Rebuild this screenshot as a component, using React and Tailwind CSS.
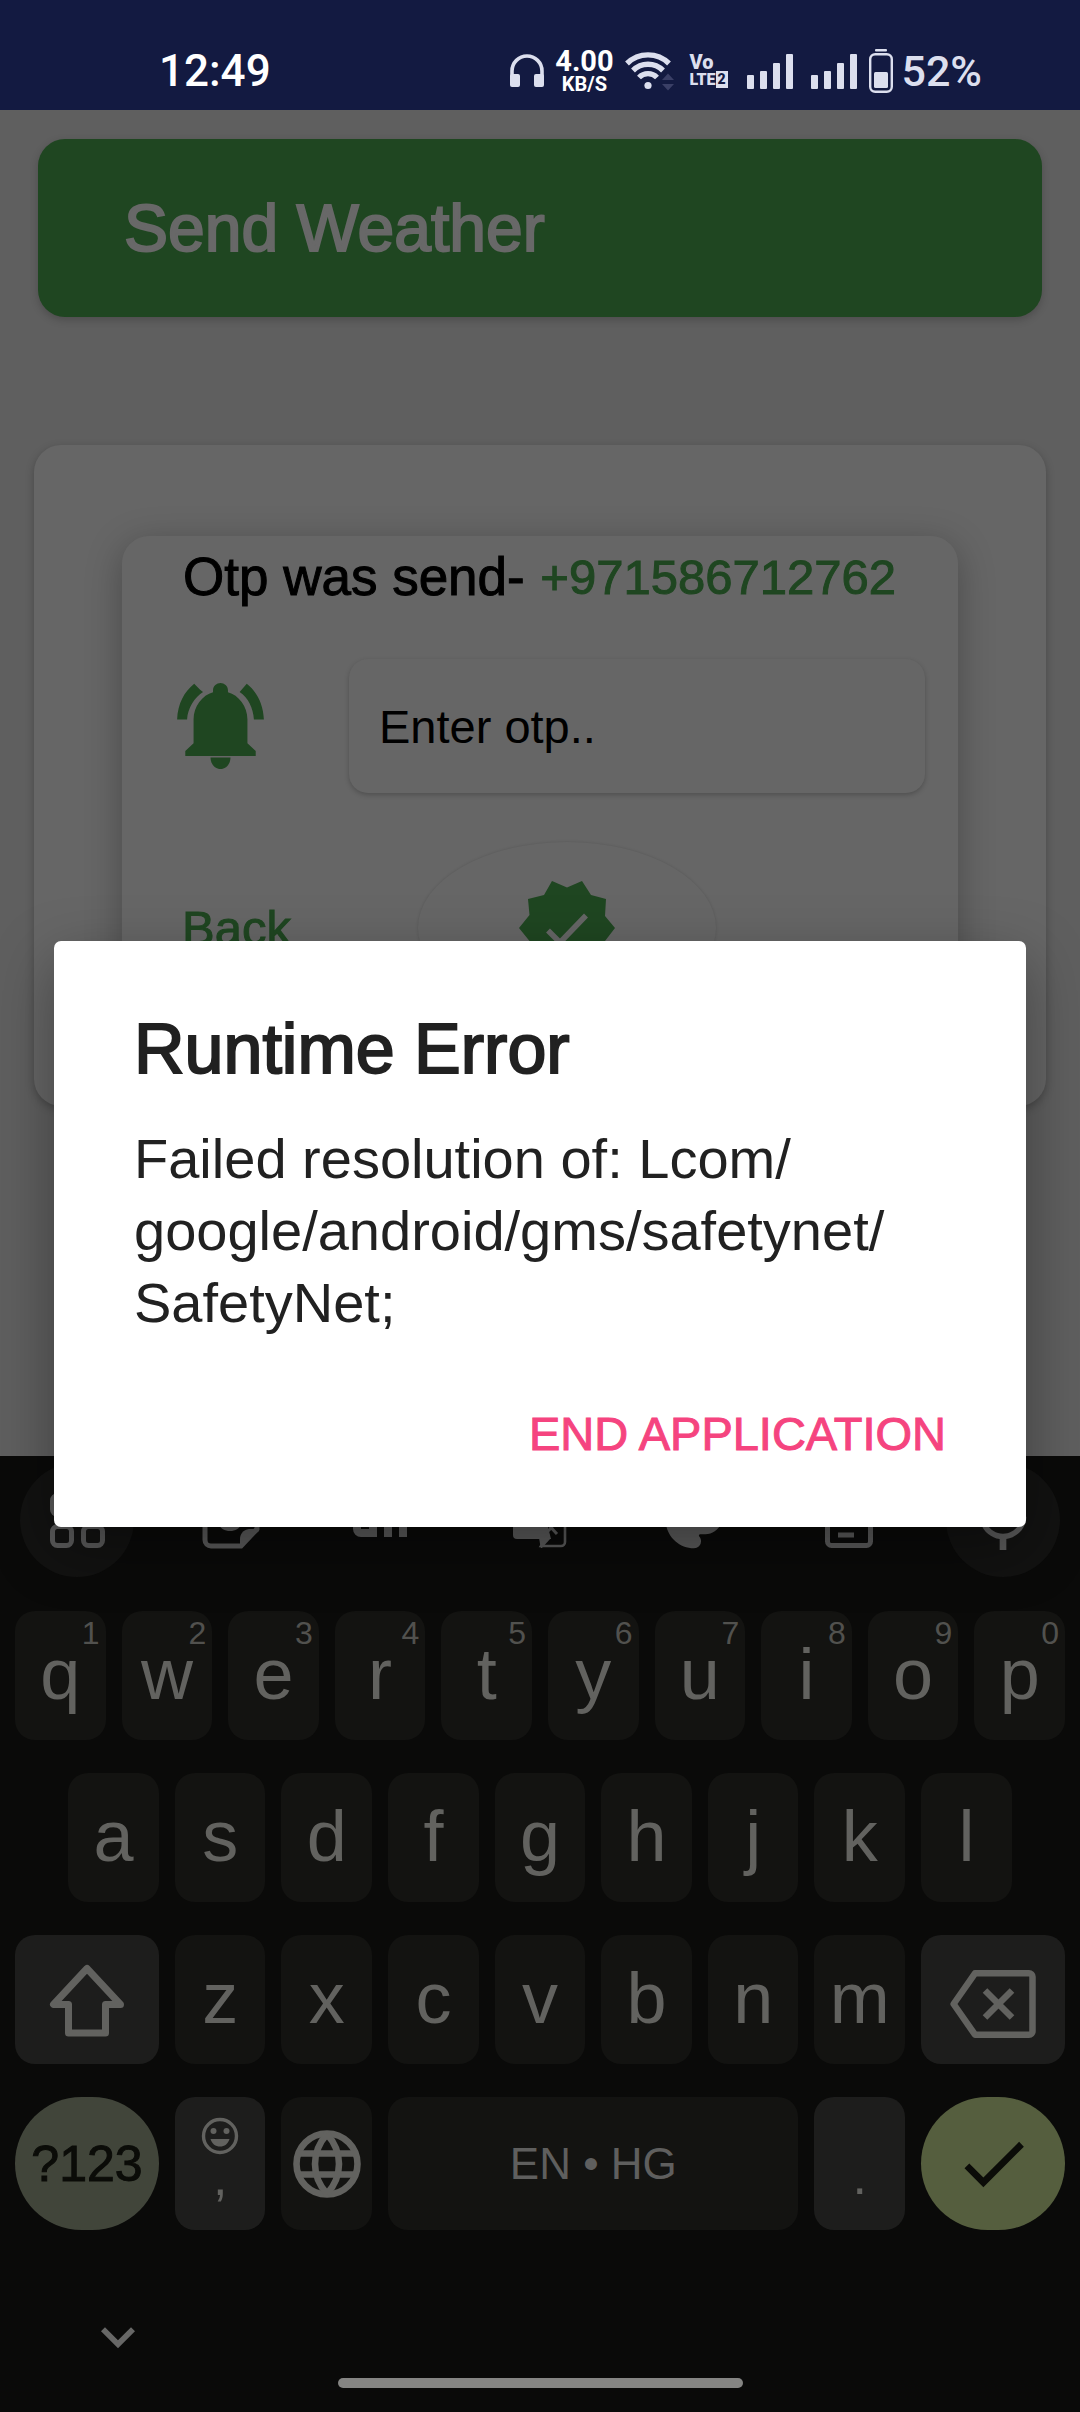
import React from "react";
import { MdCheck, MdKeyboardArrowDown, MdPalette, MdMicNone } from "react-icons/md";

const SANS = "font-['Liberation_Sans',Arial,sans-serif]";
const ROBOTO = "font-['Roboto','Liberation_Sans',sans-serif]";

function Headphones() {
  return (
    <svg viewBox="0 0 34 34" className="h-[34px] w-[34px]" aria-hidden="true">
      <path d="M2 26V17a15 15 0 0 1 30 0v9" fill="none" stroke="currentColor" strokeWidth="3.6" />
      <rect x="0" y="20" width="10" height="13" rx="2" fill="currentColor" />
      <rect x="24" y="20" width="10" height="13" rx="2" fill="currentColor" />
    </svg>
  );
}

function Wifi() {
  return (
    <svg viewBox="0 0 50 42" className="h-[42px] w-[50px]" aria-hidden="true">
      <g fill="none" stroke="currentColor" strokeWidth="5.4">
        <path d="M2 13.5a30 30 0 0 1 42 0" />
        <path d="M8 20.5a21 21 0 0 1 30 0" />
        <path d="M14 27.5a12.500 12.500 0 0 1 18 0" />
      </g>
      <circle cx="23" cy="35.500" r="3.600" fill="currentColor" />
      <path d="M37 30l6-6.500 6 6.500zM37 34h12l-6 6.500z" fill="#3a3f66" />
    </svg>
  );
}

function VoLte() {
  return (
    <span className="flex flex-col text-[16px] font-black leading-[17px]">
      <span className="text-[20px]">Vo</span>
      <span className="flex items-center">
        LTE
        <span className="flex h-[17px] w-3 items-center justify-center bg-[#dcdfee] text-[14px] text-[#131a41]">2</span>
      </span>
    </span>
  );
}

function Signal() {
  return (
    <span className="flex items-end justify-between gap-[6px]">
      <span className="h-[14px] w-[7px] rounded-[1px] bg-current" />
      <span className="h-[18px] w-[7px] rounded-[1px] bg-current" />
      <span className="h-[26px] w-[7px] rounded-[1px] bg-current" />
      <span className="h-[35px] w-[7px] rounded-[1px] bg-current" />
    </span>
  );
}

function Battery() {
  return (
    <svg viewBox="0 0 24 44" className="h-[44px] w-[24px]" aria-hidden="true">
      <rect x="6" y="0" width="12" height="2.400" rx="1" fill="currentColor" />
      <rect x="1.200" y="5.200" width="21.600" height="37.600" rx="5" fill="none" stroke="currentColor" strokeWidth="2.400" />
      <rect x="5" y="23" width="14" height="16" rx="1.500" fill="currentColor" />
    </svg>
  );
}

function Bell() {
  return (
    <svg viewBox="1 2 21 20" preserveAspectRatio="none" className="h-[86px] w-[87px]" fill="currentColor" aria-hidden="true">
      <path d="M6.580 3.580L5.150 2.150C2.760 3.970 1.180 6.800 1.030 10.500h2.400c.15-2.650 1.810-5.200 3.850-6.420z" />
      <path d="M19.570 10.500h2.400c-.15-3.700-1.730-6.530-4.130-8.350l-1.720 1.930c2.020 1.220 3.300 3.770 3.450 6.420z" />
      <path d="M18 10.500c0-3.070-2.130-5.640-4.700-6.320V3.700C13.300 2.670 12.400 2 11.500 2S9.700 2.670 9.700 3.700v.48C7.130 4.860 5 7.430 5 10.500V16l-2 1.800V19h17v-1.200L18 16z" />
      <path d="M9.100 19.300h4.800C13.900 21 12.700 22 11.500 22s-2.400-1-2.400-2.700z" />
    </svg>
  );
}

function VerifiedBadge() {
  return (
    <svg viewBox="0 0 96 94" className="h-[94px] w-[96px]" aria-hidden="true">
      <path d="M96 47L86 35l1-17-15-4L63 0 48 6.500 33 0 25 14 9 18l1.500 16L0 47l10.500 13L9 76l16 4 8 14 15-6.500L63 94l9-14 15-4-1-16z" fill="currentColor" />
      <path d="M29 49.500L41 61.500 67 34.500" fill="none" stroke="#666666" strokeWidth="5.500" />
    </svg>
  );
}

function AppsIcon() {
  return (
    <svg viewBox="0 0 55 55" className="h-[55px] w-[55px]" fill="none" stroke="currentColor" strokeWidth="5" aria-hidden="true">
      <rect x="2.500" y="2.500" width="19" height="19" rx="5" />
      <rect x="33.500" y="2.500" width="19" height="19" rx="5" />
      <rect x="2.500" y="33.500" width="19" height="19" rx="5" />
      <rect x="33.500" y="33.500" width="19" height="19" rx="5" />
    </svg>
  );
}

function StickerIcon() {
  return (
    <svg viewBox="0 0 58 58" className="h-[58px] w-[58px]" aria-hidden="true">
      <path d="M8 3h42a5 5 0 0 1 5 5v30L39 55H9a6 6 0 0 1-6-6V8a5 5 0 0 1 5-5z" fill="none" stroke="currentColor" strokeWidth="5" />
      <path d="M38 56V48c0-5 3-9 9-10h10v2z" fill="currentColor" />
      <path d="M15 28h26c-1 8-6 12-13 12S16 36 15 28z" fill="currentColor" />
    </svg>
  );
}

function GifIcon() {
  return (
    <svg viewBox="0 0 66 34" className="h-[34px] w-[66px]" fill="none" stroke="currentColor" strokeWidth="8" aria-hidden="true">
      <path d="M24 4H8a4 4 0 0 0-4 4v18a4 4 0 0 0 4 4h12V18" />
      <path d="M35 0v34M50 34V4h16M50 18h12" />
    </svg>
  );
}

function TranslateIcon() {
  return (
    <svg viewBox="0 0 54 56" className="h-[56px] w-[54px]" aria-hidden="true">
      <path d="M4 0h22l12 47H4a4 4 0 0 1-4-4V4a4 4 0 0 1 4-4z" fill="currentColor" />
      <path d="M30 11h18a4 4 0 0 1 4 4v35a4 4 0 0 1-4 4H28l6-10" fill="none" stroke="currentColor" strokeWidth="2.600" />
      <path d="M30 22h20M45 22c-2 8-7 15-12 19M32 29l12 13" fill="none" stroke="currentColor" strokeWidth="3" />
      <path d="M26 46h12l-10 11z" fill="currentColor" />
      <path d="M19 21h-6v5h3a6 6 0 1 1-1-8" fill="none" stroke="#0a0a09" strokeWidth="3" />
    </svg>
  );
}

function ClipboardIcon() {
  return (
    <svg viewBox="0 0 48 56" className="h-[56px] w-[48px]" fill="none" stroke="currentColor" strokeWidth="5" aria-hidden="true">
      <rect x="2.500" y="7" width="43" height="46.500" rx="4" />
      <path d="M13 20h22M13 32h22M13 43h16M15 6h18" />
    </svg>
  );
}

function ShiftIcon() {
  return (
    <svg viewBox="0 0 76 74" className="h-[74px] w-[76px]" fill="none" stroke="currentColor" strokeWidth="7" strokeLinejoin="round" aria-hidden="true">
      <path d="M38 5.500L4.500 41.500h15V70h37V41.500h15z" />
    </svg>
  );
}

function BackspaceIcon() {
  return (
    <svg viewBox="0 0 86 68" className="h-[68px] w-[86px]" fill="none" stroke="currentColor" strokeWidth="6.500" aria-hidden="true">
      <path d="M25 3.300h54a3.500 3.500 0 0 1 3.500 3.500v54.400a3.500 3.500 0 0 1-3.500 3.500H25L3.600 34z" strokeLinejoin="round" />
      <path d="M35 20.500l27 27M62 20.500l-27 27" />
    </svg>
  );
}

function GlobeIcon() {
  return (
    <svg viewBox="0 0 68 70" className="h-[70px] w-[68px]" fill="none" stroke="currentColor" strokeWidth="6.600" aria-hidden="true">
      <circle cx="34" cy="35" r="30.500" />
      <path d="M6 24.500h56M6 45.500h56" />
      <path d="M34 5c-16 18-16 42 0 60M34 5c16 18 16 42 0 60" />
    </svg>
  );
}

function EmojiIcon() {
  return (
    <svg viewBox="0 0 38 38" className="h-[38px] w-[38px]" aria-hidden="true">
      <circle cx="19" cy="19" r="16.500" fill="none" stroke="currentColor" strokeWidth="3.400" />
      <circle cx="12.500" cy="14" r="3" fill="currentColor" />
      <circle cx="25.500" cy="14" r="3" fill="currentColor" />
      <path d="M9.500 22h19c-1.500 5-5 7.500-9.500 7.500S11 27 9.500 22z" fill="currentColor" />
    </svg>
  );
}

function StatusBar() {
  return (
    <header className={`flex h-[110px] items-start justify-between bg-[#131a41] pl-[159px] pr-[98px] pt-[44px] text-[#dcdfee] ${ROBOTO}`}>
      <span className="text-[44px] font-medium leading-[54px] text-white">12:49</span>
      <div className="flex h-[54px] items-center">
        <Headphones />
        <span className="ml-[10px] flex w-[60px] flex-col items-center font-bold text-white">
          <span className="text-[29px] leading-[26px]">4.00</span>
          <span className="text-[20px] leading-[20px]">KB/S</span>
        </span>
        <span className="ml-[11px]"><Wifi /></span>
        <span className="ml-[14px] w-[44px]"><VoLte /></span>
        <span className="ml-[14px]"><Signal /></span>
        <span className="ml-[18px]"><Signal /></span>
        <span className="ml-[12px]"><Battery /></span>
        <span className="ml-[8px] text-[43px] font-medium leading-[54px]">52%</span>
      </div>
    </header>
  );
}

function Key({ label, hint, span = "col-span-2" }) {
  return (
    <button type="button" className={`relative flex h-[129px] items-center justify-center rounded-[20px] bg-[#131311] pb-1 text-[72px] leading-[80px] text-[#62625f] ${span}`}>
      {label}
      {hint && <span className="absolute right-[6px] top-1 text-[32px] leading-[36px] text-[#51514e]">{hint}</span>}
    </button>
  );
}

const TOP = "qwertyuiop".split("");
const HOME = "asdfghjkl".split("");
const BOTTOM = "zxcvbnm".split("");

const TOOLS = [
  { label: "Stickers", icon: <StickerIcon /> },
  { label: "GIF", icon: <GifIcon /> },
  { label: "Translate", icon: <TranslateIcon /> },
  { label: "Themes", icon: <MdPalette className="size-[68px]" /> },
  { label: "Clipboard", icon: <ClipboardIcon /> },
];

function Keyboard() {
  return (
    <section aria-label="Keyboard" className="mt-auto flex flex-col bg-[#0a0a09] pt-[7px] text-[#62625f]">
      <div className="flex items-center justify-between px-5 text-[#5a5a5a]">
        <button type="button" aria-label="Menu" className="flex size-[114px] items-center justify-center rounded-full bg-[#121211]"><AppsIcon /></button>
        {TOOLS.map((t) => (
          <button key={t.label} type="button" aria-label={t.label} className="flex size-[114px] items-center justify-center">{t.icon}</button>
        ))}
        <button type="button" aria-label="Voice typing" className="flex size-[114px] items-center justify-center rounded-full bg-[#121211]"><MdMicNone className="size-[80px]" /></button>
      </div>
      <div className="mt-[34px] grid grid-cols-[repeat(20,minmax(0,1fr))] gap-x-4 gap-y-[33px] px-[15px]">
        {TOP.map((k, i) => <Key key={k} label={k} hint={String((i + 1) % 10)} />)}
        {HOME.map((k, i) => <Key key={k} label={k} span={i === 0 ? "col-start-2 col-span-2" : "col-span-2"} />)}
        <button type="button" aria-label="Shift" className="col-span-3 col-start-1 flex h-[129px] items-center justify-center rounded-[20px] bg-[#1d1d1c]"><ShiftIcon /></button>
        {BOTTOM.map((k) => <Key key={k} label={k} />)}
        <button type="button" aria-label="Backspace" className="col-span-3 flex h-[129px] items-center justify-center rounded-[20px] bg-[#1d1d1c] pt-2"><BackspaceIcon /></button>
        <button type="button" className="col-span-3 flex h-[133px] items-center justify-center rounded-full bg-[#41453a] text-[50px] leading-[60px] text-[#0b0c08] [-webkit-text-stroke:1px_currentColor]">?123</button>
        <button type="button" aria-label="Comma and emoji" className="col-span-2 flex h-[133px] flex-col items-center rounded-[20px] bg-[#1d1d1c] pt-5">
          <EmojiIcon />
          <span className="text-[52px] leading-[44px]">,</span>
        </button>
        <button type="button" aria-label="Change language" className="col-span-2 flex h-[133px] items-center justify-center rounded-[20px] bg-[#131311]"><GlobeIcon /></button>
        <button type="button" className="col-span-8 flex h-[133px] items-center justify-center rounded-[20px] bg-[#131311] text-[44px] leading-[54px] text-[#5f5f5e]">EN • HG</button>
        <button type="button" aria-label="Period" className="col-span-2 flex h-[133px] items-end justify-center rounded-[20px] bg-[#1d1d1c] pb-6 text-[52px] leading-[60px]">.</button>
        <button type="button" aria-label="Enter" className="col-span-3 flex h-[133px] items-center justify-center rounded-full bg-[#555e3e] text-[#0b0c08]"><MdCheck className="size-[81px]" /></button>
      </div>
      <div className="flex px-[84px] pt-[73px]">
        <button type="button" aria-label="Hide keyboard"><MdKeyboardArrowDown className="size-[68px] text-[#676766]" /></button>
      </div>
      <div className="mb-6 mt-[7px] h-[10px] w-[405px] self-center rounded-full bg-[#858583]" />
    </section>
  );
}

function ErrorDialog() {
  return (
    <div className="absolute inset-x-0 top-[941px] px-[54px]">
      <div role="alertdialog" aria-labelledby="dlg-title" aria-describedby="dlg-text" className="flex flex-col rounded-[7px] bg-white pb-[60px] pl-[80px] pr-[80px] pt-[66px] text-[#212121] shadow-[0_20px_60px_rgba(0,0,0,0.35)]">
        <h2 id="dlg-title" className="text-[70px] leading-[84px] [-webkit-text-stroke:2px_currentColor]">Runtime Error</h2>
        <p id="dlg-text" className="mt-8 text-[56px] leading-[72px]">
          Failed resolution of: Lcom/<br />google/android/gms/safetynet/<br />SafetyNet;
        </p>
        <button type="button" className="mt-[62px] self-end text-[47px] leading-[66px] text-[#f5447f] [-webkit-text-stroke:1px_currentColor]">END APPLICATION</button>
      </div>
    </div>
  );
}

export default function App() {
  return (
    <div className={`relative flex min-h-screen flex-col overflow-hidden bg-[#5f5f5f] ${SANS}`}>
      <StatusBar />
      <div className="mx-[38px] mt-[29px] rounded-[27px] bg-[#1f4621] px-[86px] pb-[49px] pt-[49px] shadow-[0_3px_8px_rgba(0,0,0,0.2)]">
        <h1 className="text-[66px] leading-[80px] text-[#686868] [-webkit-text-stroke:2px_currentColor]">Send Weather</h1>
      </div>
      <main className="mx-[34px] mt-[128px] rounded-[27px] bg-[#666666] px-[88px] pb-[52px] pt-[91px] shadow-[0_3px_8px_rgba(0,0,0,0.25)]">
        <div className="rounded-[27px] bg-[#666666] pb-[40px] pt-[8px] text-[#1f4621] shadow-[0_8px_36px_rgba(0,0,0,0.28)]">
          <p className="flex justify-between whitespace-nowrap pl-[61px] pr-[62px] text-[53px] leading-[66px] [-webkit-text-stroke:1px_currentColor]">
            <span className="text-black">Otp was send-</span>
            <span className="text-[49px]">+971586712762</span>
          </p>
          <div className="mt-[49px] flex items-center pl-[55px] pr-[33px]">
            <Bell />
            <input type="text" aria-label="Otp" placeholder="Enter otp.." className="ml-[85px] h-[134px] min-w-0 flex-1 rounded-[19px] bg-[#666666] px-[30px] text-[47px] text-black shadow-[0_2px_5px_rgba(0,0,0,0.22)] outline-none placeholder:text-black placeholder:opacity-100" />
          </div>
          <div className="mt-[49px] flex items-center pl-[60px]">
            <button type="button" className="w-[110px] text-left text-[49px] leading-[66px] [-webkit-text-stroke:1px_currentColor]">Back</button>
            <button type="button" aria-label="Verify" className="ml-[126px] flex h-[172px] w-[298px] items-center justify-center rounded-[50%] shadow-[0_0_3px_rgba(0,0,0,0.15)]">
              <VerifiedBadge />
            </button>
          </div>
        </div>
      </main>
      <Keyboard />
      <ErrorDialog />
    </div>
  );
}
